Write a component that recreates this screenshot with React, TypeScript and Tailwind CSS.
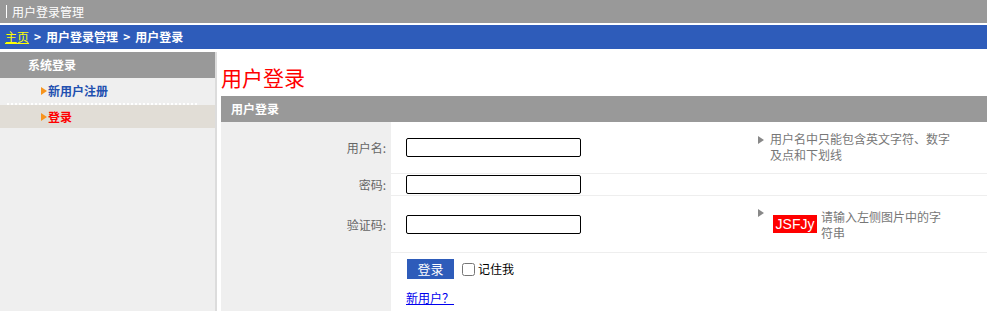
import React from "react";

const font = { fontFamily: '"Noto Sans CJK SC", "Liberation Sans", sans-serif' };

function Tri({ color = "#888", className = "" }: { color?: string; className?: string }) {
  return (
    <span
      className={`inline-block w-0 h-0 border-y-[4px] border-y-transparent border-l-[6px] ${className}`}
      style={{ borderLeftColor: color }}
    />
  );
}

export default function App() {
  return (
    <div className="w-[987px] min-h-[311px] bg-white text-[12px] leading-none" style={font}>
      {/* top bar */}
      <div className="h-[23px] bg-[#999999] flex items-center text-white">
        <span className="ml-[6px] w-px h-[13px] bg-white" />
        <span className="ml-[5px] leading-[23px]">用户登录管理</span>
      </div>
      <div className="h-[2px] bg-white" />
      {/* breadcrumb */}
      <div className="h-[24px] bg-[#2e5cba] flex items-center pl-[5px] text-white font-bold">
        <a className="text-[#ffff00] underline font-normal">主页</a>
        <span className="mx-[5px]">&gt;</span>
        <span>用户登录管理</span>
        <span className="mx-[5px]">&gt;</span>
        <span>用户登录</span>
      </div>
      <div className="h-[3px] bg-white" />
      <div className="flex">
        {/* sidebar */}
        <div className="w-[217px] bg-[#efefef] border-r-2 border-[#dcdcdc] min-h-[259px]">
          <div className="h-[26px] bg-[#999999] text-white font-bold flex items-center pl-[28px]">系统登录</div>
          <div className="h-[25px] flex items-center pl-[41px] text-[#2250b0] font-bold">
            <Tri color="#f7941d" className="mr-[1px]" />
            <span>新用户注册</span>
          </div>
          <div className="h-[2px] mx-[7px] w-[190px] border-t-2 border-dotted border-white" />
          <div className="h-[23px] bg-[#e1ddd6] flex items-center pl-[41px] text-[#ff0000] font-bold">
            <Tri color="#f7941d" className="mr-[1px]" />
            <span>登录</span>
          </div>
        </div>
        {/* main */}
        <div className="ml-[4px] flex-1">
          <div className="h-[44px] flex items-end text-[#ff0000] text-[21px] leading-[26px] pb-[6px]">用户登录</div>
          <div className="h-[26px] bg-[#999999] text-white font-bold flex items-center pl-[10px]">用户登录</div>
          {/* row 1 */}
          <div className="flex">
            <div className="w-[170px] bg-[#efefef] flex items-center justify-end pr-[5px] text-[#666]">用户名:</div>
            <div className="flex-1 flex border-b border-[#eeeeee] h-[52px]">
              <div className="w-[364px] flex items-center pl-[15px]">
                <input className="w-[175px] h-[19px] border border-black rounded-[2px] bg-white" />
              </div>
              <div className="w-[197px] flex items-start pl-[3px] pt-[9px] text-[#777] leading-[16px]">
                <Tri className="mt-[5px] shrink-0" />
                <span className="ml-[6px]">用户名中只能包含英文字符、数字及点和下划线</span>
              </div>
            </div>
          </div>
          {/* row 2 */}
          <div className="flex">
            <div className="w-[170px] bg-[#efefef] flex items-center justify-end pr-[5px] text-[#666]">密码:</div>
            <div className="flex-1 flex border-b border-[#eeeeee] h-[22px]">
              <div className="w-[364px] flex items-center pl-[15px]">
                <input type="password" className="w-[175px] h-[19px] border border-black rounded-[2px] bg-white" />
              </div>
            </div>
          </div>
          {/* row 3 */}
          <div className="flex">
            <div className="w-[170px] bg-[#efefef] flex items-center justify-end pr-[5px] text-[#666]">验证码:</div>
            <div className="flex-1 flex border-b border-[#eeeeee] h-[57px]">
              <div className="w-[364px] flex items-center pl-[15px]">
                <input className="w-[175px] h-[19px] border border-black rounded-[2px] bg-white" />
              </div>
              <div className="w-[197px] flex items-start pl-[3px] pt-[13px] text-[#777] leading-[16px]">
                <Tri className="shrink-0" />
                <span
                  className="ml-[9px] mt-[6px] h-[18px] w-[44px] shrink-0 bg-[#ff0000] text-white text-[14px] leading-[18px] text-center"
                  style={{ fontFamily: '"Liberation Sans", sans-serif' }}
                >
                  JSFJy
                </span>
                <span className="ml-[4px]">请输入左侧图片中的字符串</span>
              </div>
            </div>
          </div>
          {/* row 4 */}
          <div className="flex">
            <div className="w-[170px] bg-[#efefef] h-[60px]" />
            <div className="flex-1 pl-[16px] pt-[6px]">
              <div className="flex items-center h-[20px]">
                <button className="w-[47px] h-[20px] bg-[#2e5cba] text-white text-[13px] leading-[20px]">登录</button>
                <input type="checkbox" className="ml-[8px] w-[13px] h-[13px]" />
                <span className="ml-[3px] text-black">记住我</span>
              </div>
              <a className="inline-block mt-[12px] -ml-[1px] text-[#0000ee] underline leading-[14px]">新用户？</a>
            </div>
          </div>
        </div>
      </div>
    </div>
  );
}
